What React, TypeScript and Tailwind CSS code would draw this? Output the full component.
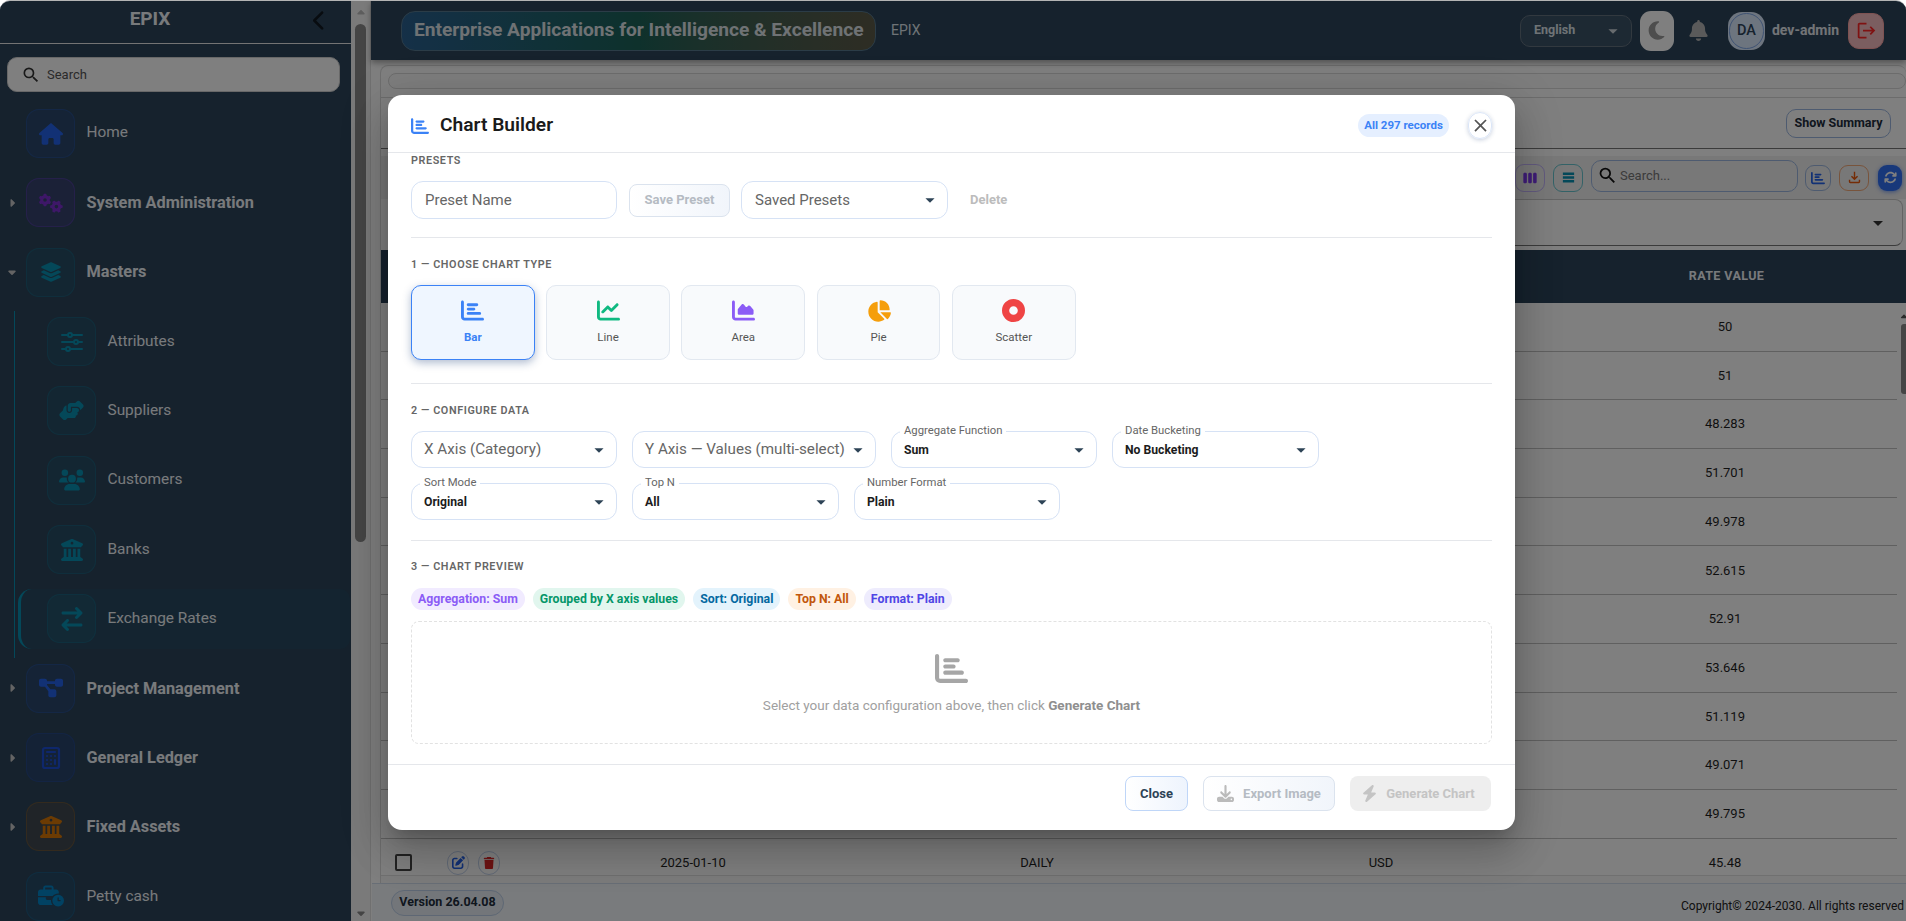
import React from "react";
import { FaHouse, FaGears, FaLayerGroup, FaUsers, FaBuildingColumns, FaArrowRightArrowLeft, FaDiagramProject, FaBusinessTime, FaCaretRight, FaCaretDown, FaCaretUp, FaChevronLeft, FaMoon, FaBell, FaChartBar, FaChartLine, FaChartArea, FaChartPie, FaCircleDot, FaDownload, FaBolt, FaArrowsRotate, FaPenToSquare, FaTrash, FaHandshakeAngle } from "react-icons/fa6";
import { MdSearch, MdClose, MdArrowDropDown, MdViewWeek, MdTableRows, MdLogout, MdOutlineFileDownload } from "react-icons/md";
import { Calculator } from "lucide-react";

function SlidersIcon({ size, className }: { size: number; className?: string }) {
  return (
    <svg width={size} height={size} viewBox="0 0 24 24" fill="none" stroke="currentColor" strokeWidth="2" strokeLinecap="round" className={className}>
      <path d="M2 5h6M12 5h10M2 12h12M18 12h4M2 19h4M10 19h12" />
      <circle cx="10" cy="5" r="2" />
      <circle cx="16" cy="12" r="2" />
      <circle cx="8" cy="19" r="2" />
    </svg>
  );
}

function CalcIcon({ size, className }: { size: number; className?: string }) {
  return <Calculator size={size} strokeWidth={2.2} className={className} />;
}

type Nav = { label: string; Icon: any; box: string; icon: string; bold?: boolean; arrow?: "r" | "d"; size?: number; text?: string };

const top1: Nav[] = [
  { label: "Home", Icon: FaHouse, box: "bg-[#2563eb]/12 border-[#2563eb]/25", icon: "text-[#2563eb]", text: "pb-[2px]" },
  { label: "System Administration", Icon: FaGears, box: "bg-[#7c3aed]/15 border-[#7c3aed]/30", icon: "text-[#7c2fd0]", bold: true, arrow: "r" },
  { label: "Masters", Icon: FaLayerGroup, box: "bg-[#0891b2]/12 border-[#0891b2]/25", icon: "text-[#0891b2]", bold: true, arrow: "d", size: 22 },
];
const kids: Nav[] = [
  { label: "Attributes", Icon: SlidersIcon, box: "bg-[#0891b2]/12 border-[#0891b2]/25", icon: "text-[#0891b2]" },
  { label: "Suppliers", Icon: FaHandshakeAngle, box: "bg-[#0891b2]/12 border-[#0891b2]/25", icon: "text-[#0891b2]", size: 25 },
  { label: "Customers", Icon: FaUsers, box: "bg-[#0891b2]/12 border-[#0891b2]/25", icon: "text-[#0891b2]", size: 26 },
  { label: "Banks", Icon: FaBuildingColumns, box: "bg-[#0891b2]/12 border-[#0891b2]/25", icon: "text-[#0891b2]", size: 22 },
];
const top2: Nav[] = [
  { label: "Project Management", Icon: FaDiagramProject, box: "bg-[#2563eb]/12 border-[#2563eb]/25", icon: "text-[#2563eb]", bold: true, arrow: "r", text: "pt-[1px]" },
  { label: "General Ledger", Icon: CalcIcon, box: "bg-[#1d4ed8]/15 border-[#1d4ed8]/25", icon: "text-[#1d4ed8]", bold: true, arrow: "r", text: "pt-[1px]" },
  { label: "Fixed Assets", Icon: FaBuildingColumns, box: "bg-[#d97706]/12 border-[#d97706]/25", icon: "text-[#d97706]", size: 22, bold: true, arrow: "r" },
  { label: "Petty cash", Icon: FaBusinessTime, box: "bg-[#0284c7]/12 border-[#0284c7]/25", icon: "text-[#0284c7]", size: 26 },
];

function Box({ n }: { n: Nav }) {
  const I = n.Icon;
  return (
    <div className={`w-[49px] h-[49px] shrink-0 rounded-[13px] border flex items-center justify-center ${n.box}`}>
      <I size={n.size ?? 24} className={n.icon} />
    </div>
  );
}

function TopRow({ n }: { n: Nav }) {
  return (
    <div className="h-[69.33px] flex items-center">
      <div className="w-[23px] mr-[3px] flex justify-center text-[#c8c8c8]">
        {n.arrow === "r" && <FaCaretRight size={12} />}
        {n.arrow === "d" && <FaCaretDown size={12} />}
      </div>
      <Box n={n} />
      <span className={`ml-[11.5px] text-[#f1f5f9] ${n.bold ? "text-[16.3px] font-bold" : "text-[15.4px]"} ${n.text ?? ""}`}>{n.label}</span>
    </div>
  );
}

function KidRow({ n }: { n: Nav }) {
  return (
    <div className="h-[69.33px] flex items-center pl-[47px]">
      <Box n={n} />
      <span className="ml-[11.5px] pb-[1px] text-[15.4px] text-[#f1f5f9]">{n.label}</span>
    </div>
  );
}

function Sidebar() {
  const ex: Nav = { label: "Exchange Rates", Icon: FaArrowRightArrowLeft, box: "bg-[#0891b2]/12 border-[#0891b2]/25", icon: "text-[#0891b2]" };
  return (
    <aside className="w-[351px] shrink-0 h-full bg-[#2c445a] overflow-hidden">
      <div className="h-[43px] border-b border-[#e8e8e8] flex items-center">
        <span className="w-[300px] text-center text-[19px] font-bold text-[#f1f5f9] pb-[5px]">EPIX</span>
        <FaChevronLeft size={21} className="ml-[9px] mb-[4px] text-[#101820]" />
      </div>
      <div className="mt-[13px] mx-[7px] w-[333px] h-[35px] rounded-[10px] bg-[#ffffff] border border-[#d0d0d0] flex items-center pl-[13px]">
        <MdSearch size={20} className="text-[#333]" />
        <span className="ml-[6px] text-[13px] text-[#555]">Search</span>
      </div>
      <div className="mt-[7px]">
        {top1.map((n) => <TopRow key={n.label} n={n} />)}
        <div className="relative">
          <div className="absolute left-[14px] top-[4px] bottom-[-4px] w-px bg-[#0891b2]" />
          {kids.map((n) => <KidRow key={n.label} n={n} />)}
          <div className="h-[69.33px] flex items-center pl-[18px]">
            <div className="w-[332px] h-[60px] rounded-l-[14px] rounded-r-[10px] bg-[#0891b2]/8 border-l-[3px] border-[#0891b2] flex items-center pl-[26px]">
              <Box n={ex} />
              <span className="ml-[11.5px] pb-[1px] text-[15.4px] text-[#f1f5f9]">{ex.label}</span>
            </div>
          </div>
        </div>
        {top2.map((n) => <TopRow key={n.label} n={n} />)}
      </div>
    </aside>
  );
}

function SideScroll() {
  return (
    <div className="w-[20px] shrink-0 h-full bg-[#f4f4f4] border-r border-[#e0e0e0] flex flex-col items-center text-[#888]">
      <FaCaretUp size={12} className="mt-[6px] text-[#bbb]" />
      <div className="mt-[5px] w-[11px] h-[518px] rounded-full bg-[#8a8a8a]" />
      <div className="flex-1" />
      <FaCaretDown size={12} className="mb-[2px]" />
    </div>
  );
}

function TopBar() {
  return (
    <header className="h-[59px] shrink-0 bg-[#2c445a] flex items-center shadow-[0_3px_6px_rgba(0,0,0,0.35)] relative">
      <div className="ml-[30px] w-[475px] h-[40px] rounded-[14px] border border-[#56788e] bg-linear-to-r from-[#2a6090] via-[#1c6258] to-[#5c5a48] flex items-center pl-[12px]">
        <span className="text-[19.15px] font-bold text-[#dfe4e9] whitespace-nowrap">Enterprise Applications for Intelligence &amp; Excellence</span>
      </div>
      <span className="ml-[15px] text-[14px] text-[#dfe6ec]">EPIX</span>
      <div className="flex-1" />
      <div className="w-[112px] h-[32px] rounded-[10px] border border-[#64727f] bg-[#3a5266] flex items-center pl-[13px] text-[12.5px] font-bold text-[#dfe6ec]">
        English
        <MdArrowDropDown size={22} className="ml-auto mr-[7px] text-[#cfd6dc]" />
      </div>
      <div className="ml-[8px] w-[34px] h-[40px] rounded-[11px] bg-white flex items-center justify-center">
        <FaMoon size={21} className="text-[#9a9a9a]" />
      </div>
      <FaBell size={21} className="ml-[14px] text-[#b4b4b4]" />
      <div className="ml-[19px] w-[37px] h-[38px] rounded-[14px] bg-[#dbeafe] flex items-center justify-center">
        <div className="w-[35px] h-[36px] rounded-full border border-[#7ea7e8] flex items-center justify-center text-[14.5px] font-medium text-[#2c445a]">DA</div>
      </div>
      <span className="ml-[7px] text-[14px] font-bold text-[#e5e9ee]">dev-admin</span>
      <div className="ml-[9px] mr-[22px] w-[36px] h-[36px] rounded-[11px] bg-[#f6bcc0] border border-[#fca5a5] flex items-center justify-center">
        <MdLogout size={21} className="text-[#ff2424]" />
      </div>
    </header>
  );
}

const rates = ["50", "51", "48.283", "51.701", "49.978", "52.615", "52.91", "53.646", "51.119", "49.071", "49.795"];

function Row({ rate }: { rate: string }) {
  return (
    <div className="h-[48.7px] w-[1516px] shrink-0 grid grid-cols-[140px_344px_344px_344px_344px] items-center border-b border-[#c0c0c0] text-[13px] text-[#1f1f1f] text-center">
      <div /><div /><div /><div />
      <div>{rate}</div>
    </div>
  );
}

function Content() {
  return (
    <div className="flex-1 min-h-0 flex flex-col bg-white">
      <div className="flex-1 min-h-0 ml-[9px] mt-[5px] rounded-t-[8px] border-t border-l border-[#dddddd] flex flex-col">
        <div className="mt-[7px] ml-[7px] h-[16px] shrink-0 rounded-[8px] border border-[#d8d8d8] bg-[#fafafa]" />
        <div className="mt-[8px] h-[52px] shrink-0 border-t border-b border-t-[#d8d8d8] border-b-[#777] flex items-center justify-end pr-[15px]">
          <div className="w-[105px] h-[29px] rounded-[10px] border border-[#9db7e0] flex items-center justify-center text-[12.5px] font-bold text-[#1e2d3d]">Show Summary</div>
        </div>
        <div className="mt-[7px] h-[43px] shrink-0 flex items-center justify-end pr-[4px] bg-[#f0f0f0]">
          <div className="w-[30px] h-[28px] rounded-[9px] border border-[#c4b5fd] flex items-center justify-center"><MdViewWeek size={16} className="text-[#7c3aed]" /></div>
          <div className="ml-[8px] w-[30px] h-[28px] rounded-[9px] border border-[#67c5cf] flex items-center justify-center"><MdTableRows size={15} className="text-[#0891b2]" /></div>
          <div className="ml-[8px] mb-[4px] w-[207px] h-[32px] rounded-[10px] border border-[#9db7e0] flex items-center pl-[5px] text-[13px] text-[#777]">
            <MdSearch size={21} className="text-[#111]" />
            <span className="ml-[2px]">Search...</span>
          </div>
          <div className="ml-[7px] w-[26px] h-[26px] rounded-[9px] border border-[#9db7e0] flex items-center justify-center"><FaChartBar size={14} className="text-[#2563eb]" /></div>
          <div className="ml-[8px] w-[30px] h-[26px] rounded-[9px] border border-[#f0a878] flex items-center justify-center"><MdOutlineFileDownload size={17} className="text-[#ea580c]" /></div>
          <div className="ml-[9px] w-[24px] h-[26px] rounded-[9px] bg-[#3170f5] flex items-center justify-center shadow-[0_1px_4px_rgba(37,99,235,0.6)]"><FaArrowsRotate size={13} className="text-white" /></div>
        </div>
        <div className="mr-[3px] h-[47px] shrink-0 ml-[7px] rounded-[8px] border border-[#c8c8c8] border-b-[#777] flex items-center justify-end pr-[12px]">
          <MdArrowDropDown size={24} className="text-[#333]" />
        </div>
        <div className="mt-[4px] h-[53px] shrink-0 bg-[#2c445a] flex items-center">
          <div className="w-[1516px] pl-[1172px] text-center text-[12.5px] font-bold text-[#f1f5f9]">
            <span className="inline-block w-[344px] tracking-[0.4px] pl-[3px]">RATE VALUE</span>
          </div>
        </div>
        <div className="h-[572px] shrink-0 overflow-hidden flex relative">
          <div className="flex flex-col">
            {rates.map((r) => <Row key={r} rate={r} />)}
            <div className="h-[48.7px] w-[1516px] shrink-0 grid grid-cols-[140px_344px_344px_344px_344px] items-center text-[13px] text-[#1f1f1f] text-center">
              <div className="flex items-center pl-[14px]">
                <div className="w-[17px] h-[17px] rounded-[2px] border-2 border-[#444]" />
                <div className="ml-[35px] w-[22px] h-[24px] rounded-full border border-[#c3d3ec] flex items-center justify-center"><FaPenToSquare size={13} className="text-[#2563eb]" /></div>
                <div className="ml-[9px] w-[22px] h-[24px] rounded-full border border-[#c3d3ec] flex items-center justify-center"><FaTrash size={12} className="text-[#dc2626]" /></div>
              </div>
              <div>2025-01-10</div>
              <div>DAILY</div>
              <div>USD</div>
              <div>45.48</div>
            </div>
          </div>
          <div className="ml-[4px] w-[6px]">
            <FaCaretUp size={10} className="text-[#555] mt-[9px] -ml-[2px]" />
            <div className="mt-[2px] h-[70px] w-[6px] rounded-l-[3px] bg-[#8a8a8a]" />
          </div>
        </div>
        <div className="h-[8px] shrink-0 bg-[#f8f8f8] border-t border-[#e0e0e0]" />
      </div>
      <div className="h-[38px] shrink-0 ml-[1px] border-t border-[#d0dcec] bg-[#f2f6fb] flex items-center pl-[19px] relative">
        <div className="w-[113px] h-[26px] rounded-full border border-[#bccfe8] bg-[#e6ecf5] flex items-center justify-center text-[12.5px] font-bold text-[#1e2d3d]">Version 26.04.08</div>
        <span className="absolute left-[1309px] top-[13px] text-[12px] text-[#222] whitespace-nowrap">Copyright© 2024-2030. All rights reserved</span>
      </div>
    </div>
  );
}

function Heading({ children, cls }: { children: React.ReactNode; cls: string }) {
  return <div className={`h-[14px] leading-[16px] text-[10.8px] font-semibold tracking-[0.6px] text-[#666] ${cls}`}>{children}</div>;
}

function Plain({ text, cls }: { text: string; cls: string }) {
  return (
    <div className={`h-[37px] rounded-[12px] border border-[#d6e2f5] bg-white flex items-center pl-[12px] pr-[6px] text-[15.2px] text-[#666] ${cls}`}>
      <span className="whitespace-nowrap">{text}</span>
      <MdArrowDropDown size={22} className="ml-auto shrink-0 text-[#2d4356]" />
    </div>
  );
}

function Floating({ label, value, cls }: { label: string; value: string; cls: string }) {
  return (
    <div className={`relative h-[37px] rounded-[12px] border border-[#d6e2f5] bg-white flex items-center pl-[12px] pr-[6px] text-[12.2px] font-bold text-[#1c1c1c] ${cls}`}>
      <span className="absolute left-[8px] -top-[8px] px-[4px] bg-white text-[11.3px] font-normal leading-[14px] text-[#666]">{label}</span>
      <span className="pt-[2px]">{value}</span>
      <MdArrowDropDown size={22} className="ml-auto shrink-0 text-[#2d4356]" />
    </div>
  );
}

function TypeCard({ Icon, label, icon, size = 23, on }: { Icon: any; label: string; icon: string; size?: number; on?: boolean }) {
  return (
    <div className={`w-[123.6px] h-[75px] rounded-[10px] flex flex-col items-center ${on ? "border-[1.5px] border-[#3b82f6] bg-[#eff6ff] shadow-[0_3px_8px_rgba(30,64,120,0.35)]" : "border border-[#e2e8f0] bg-[#f8fafc]"}`}>
      <div className="h-[23px] mt-[13px] flex items-center"><Icon size={size} className={icon} /></div>
      <span className={`mt-[8px] leading-[14px] text-[11.5px] ${on ? "font-bold text-[#3b82f6]" : "text-[#555]"}`}>{label}</span>
    </div>
  );
}

function Chip({ text, cls }: { text: string; cls: string }) {
  return <span className={`h-[22px] rounded-full px-[7px] flex items-center text-[12.3px] font-bold whitespace-nowrap ${cls}`}>{text}</span>;
}

function Modal() {
  return (
    <div className="ml-[388px] mt-[94px] w-[1127px] h-[735px] rounded-[14px] bg-white flex flex-col shadow-[0_11px_15px_-7px_rgba(0,0,0,0.2),0_24px_38px_3px_rgba(0,0,0,0.14),0_9px_46px_8px_rgba(0,0,0,0.12)]">
      <div className="h-[58px] shrink-0 border-b border-[#e5e7eb] flex items-center px-[23px] pt-[4px]">
        <FaChartBar size={18} className="text-[#3b82f6]" />
        <span className="ml-[11px] text-[19.2px] font-semibold text-[#1a1a1a]">Chart Builder</span>
        <div className="flex-1" />
        <span className="w-[91px] h-[23px] rounded-full bg-[#e5efff] flex items-center justify-center text-[11.5px] font-bold text-[#3b82f6]">All 297 records</span>
        <div className="ml-[19px] w-[24px] h-[27px] rounded-full border border-[#dbe6f8] flex items-center justify-center shadow-[0_1px_4px_rgba(30,64,120,0.25)]">
          <MdClose size={21} className="text-[#555]" />
        </div>
      </div>
      <div className="flex-1 px-[23px]">
        <Heading cls="">PRESETS</Heading>
        <div className="mt-[14px] flex items-center h-[38px]">
          <div className="w-[206px] h-[38px] rounded-[12px] border border-[#d6e2f5] flex items-center pl-[13px] text-[15px] text-[#666]">Preset Name</div>
          <div className="ml-[12px] w-[101px] h-[33px] rounded-[8px] border border-[#dbe3ee] bg-linear-to-r from-white to-[#f1f5fb] flex items-center justify-center text-[13px] font-bold text-[#b5bbc3]">Save Preset</div>
          <div className="ml-[11px] w-[207px] h-[38px] rounded-[12px] border border-[#d6e2f5] flex items-center pl-[13px] pr-[6px] text-[15px] text-[#666]">
            Saved Presets
            <MdArrowDropDown size={22} className="ml-auto text-[#2d4356]" />
          </div>
          <span className="ml-[22px] text-[13px] font-bold text-[#bcbcbc]">Delete</span>
        </div>
        <div className="mt-[18px] h-px bg-[#e5e7eb]" />
        <Heading cls="mt-[19px]">1 — CHOOSE CHART TYPE</Heading>
        <div className="mt-[14px] flex gap-[11.65px]">
          <TypeCard Icon={FaChartBar} label="Bar" icon="text-[#3b82f6]" on />
          <TypeCard Icon={FaChartLine} label="Line" icon="text-[#10b981]" />
          <TypeCard Icon={FaChartArea} label="Area" icon="text-[#8b5cf6]" />
          <TypeCard Icon={FaChartPie} label="Pie" icon="text-[#f59e0b]" size={24} />
          <TypeCard Icon={FaCircleDot} label="Scatter" icon="text-[#ef4444]" />
        </div>
        <div className="mt-[23px] h-px bg-[#e5e7eb]" />
        <Heading cls="mt-[19px]">2 — CONFIGURE DATA</Heading>
        <div className="mt-[14px] flex gap-[15px]">
          <Plain text="X Axis (Category)" cls="w-[206px]" />
          <Plain text="Y Axis — Values (multi-select)" cls="w-[244px]" />
          <Floating label="Aggregate Function" value="Sum" cls="w-[206px]" />
          <Floating label="Date Bucketing" value="No Bucketing" cls="w-[207px]" />
        </div>
        <div className="mt-[15px] flex gap-[15px]">
          <Floating label="Sort Mode" value="Original" cls="w-[206px]" />
          <Floating label="Top N" value="All" cls="w-[207px]" />
          <Floating label="Number Format" value="Plain" cls="w-[206px]" />
        </div>
        <div className="mt-[20px] h-px bg-[#e5e7eb]" />
        <Heading cls="mt-[18px]">3 — CHART PREVIEW</Heading>
        <div className="mt-[15px] flex gap-[8px]">
          <Chip text="Aggregation: Sum" cls="bg-[#f1ebff] text-[#8b5cf6]" />
          <Chip text="Grouped by X axis values" cls="bg-[#e1f6ee] text-[#059669]" />
          <Chip text="Sort: Original" cls="bg-[#e3f3fc] text-[#0369a1]" />
          <Chip text="Top N: All" cls="bg-[#fff1e3] text-[#c2570c]" />
          <Chip text="Format: Plain" cls="bg-[#eeecfd] text-[#4f46e5]" />
        </div>
        <div className="mt-[11px] h-[123px] rounded-[8px] border border-dashed border-[#e2e2e2] flex flex-col items-center">
          <FaChartBar size={33} className="mt-[30px] text-[#a6a6a6]" />
          <p className="mt-[12px] text-[13.5px] leading-[16px] text-[#a0a0a0]">Select your data configuration above, then click <b className="font-bold text-[#8f8f8f]">Generate Chart</b></p>
        </div>
      </div>
      <div className="h-[66px] shrink-0 border-t border-[#e5e7eb] flex items-start justify-end pt-[11px] pr-[24px]">
        <div className="w-[63px] h-[35px] rounded-[8px] border border-[#bfd6f8] bg-linear-to-r from-white to-[#eef4fd] flex items-center justify-center text-[13px] font-bold text-[#2d4356]">Close</div>
        <div className="ml-[15px] w-[132px] h-[35px] rounded-[8px] border border-[#dbe3ee] bg-linear-to-r from-white to-[#f1f5fb] flex items-center justify-center text-[13px] font-bold text-[#b5bbc3]">
          <FaDownload size={17} className="mr-[9px] text-[#bbbbbb]" />Export Image
        </div>
        <div className="ml-[15px] w-[141px] h-[35px] rounded-[8px] bg-[#eeeeee] flex items-center justify-center pr-[5px] text-[13px] font-bold text-[#c4c4c4]">
          <FaBolt size={17} className="mr-[8px] text-[#c4c4c4]" />Generate Chart
        </div>
      </div>
    </div>
  );
}

export default function App() {
  return (
    <div className="w-[1906px] h-[921px] bg-white">
      <div className="relative w-full h-full overflow-hidden rounded-t-[10px] border-t border-[#b4b4b4] [font-family:Roboto,sans-serif]">
        <div className="flex h-full">
          <Sidebar />
          <SideScroll />
          <main className="flex-1 min-w-0 h-full flex flex-col">
            <TopBar />
            <Content />
          </main>
        </div>
        <div className="absolute inset-0 z-10 bg-black/50">
          <Modal />
        </div>
      </div>
    </div>
  );
}
